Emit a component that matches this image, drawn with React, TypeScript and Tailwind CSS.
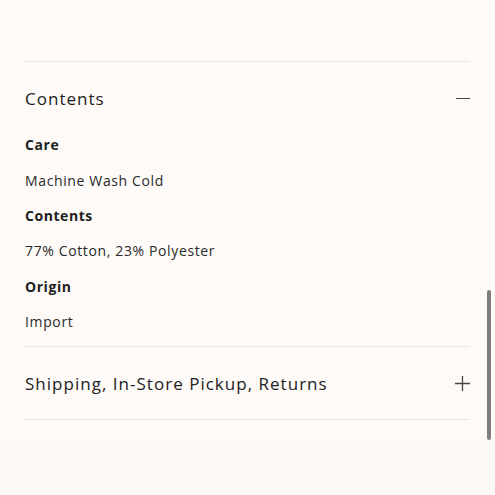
import React from "react";

const font = { fontFamily: '"Open Sans", "Liberation Sans", sans-serif' };

function Item({ label, value }: { label: string; value: string }) {
  return (
    <div>
      <div className="h-[35.4px] flex items-center text-[14px] font-bold text-[#1f1f1f] tracking-[0.04em]">{label}</div>
      <div className="h-[35.4px] flex items-center text-[14px] text-[#2a2a2a] tracking-[0.045em]">{value}</div>
    </div>
  );
}

export default function App() {
  return (
    <div className="w-[495px] h-[495px] bg-[#fdfaf8] relative overflow-hidden" style={font}>
      <div className="px-[25px]">
        <div className="h-[61px]" />
        <div className="border-t border-[#e9e5e2]" />
        <div className="h-[73px] flex items-center justify-between">
          <span className="text-[17px] text-[#222] tracking-[0.06em]">Contents</span>
          <span className="block w-[14px] h-[1.5px] bg-[#444]" />
        </div>
        <div className="flex flex-col -mt-[8px]">
          <Item label="Care" value="Machine Wash Cold" />
          <Item label="Contents" value="77% Cotton, 23% Polyester" />
          <Item label="Origin" value="Import" />
        </div>
        <div className="border-t border-[#e9e5e2] mt-[7px]" />
        <div className="h-[72px] flex items-center justify-between">
          <span className="text-[17px] text-[#222] tracking-[0.06em]">Shipping, In-Store Pickup, Returns</span>
          <svg width="15" height="15" viewBox="0 0 15 15" className="text-[#444]">
            <path d="M7.5 0V15M0 7.5H15" stroke="currentColor" strokeWidth="1.3" />
          </svg>
        </div>
        <div className="border-t border-[#e9e5e2]" />
      </div>
      <div className="absolute left-0 right-0 bottom-0 h-[55px] bg-[#fbf8f6]" />
      <div className="absolute left-[487px] top-[290px] w-[4px] h-[150px] rounded-full bg-[#7d7d7d]" />
    </div>
  );
}
